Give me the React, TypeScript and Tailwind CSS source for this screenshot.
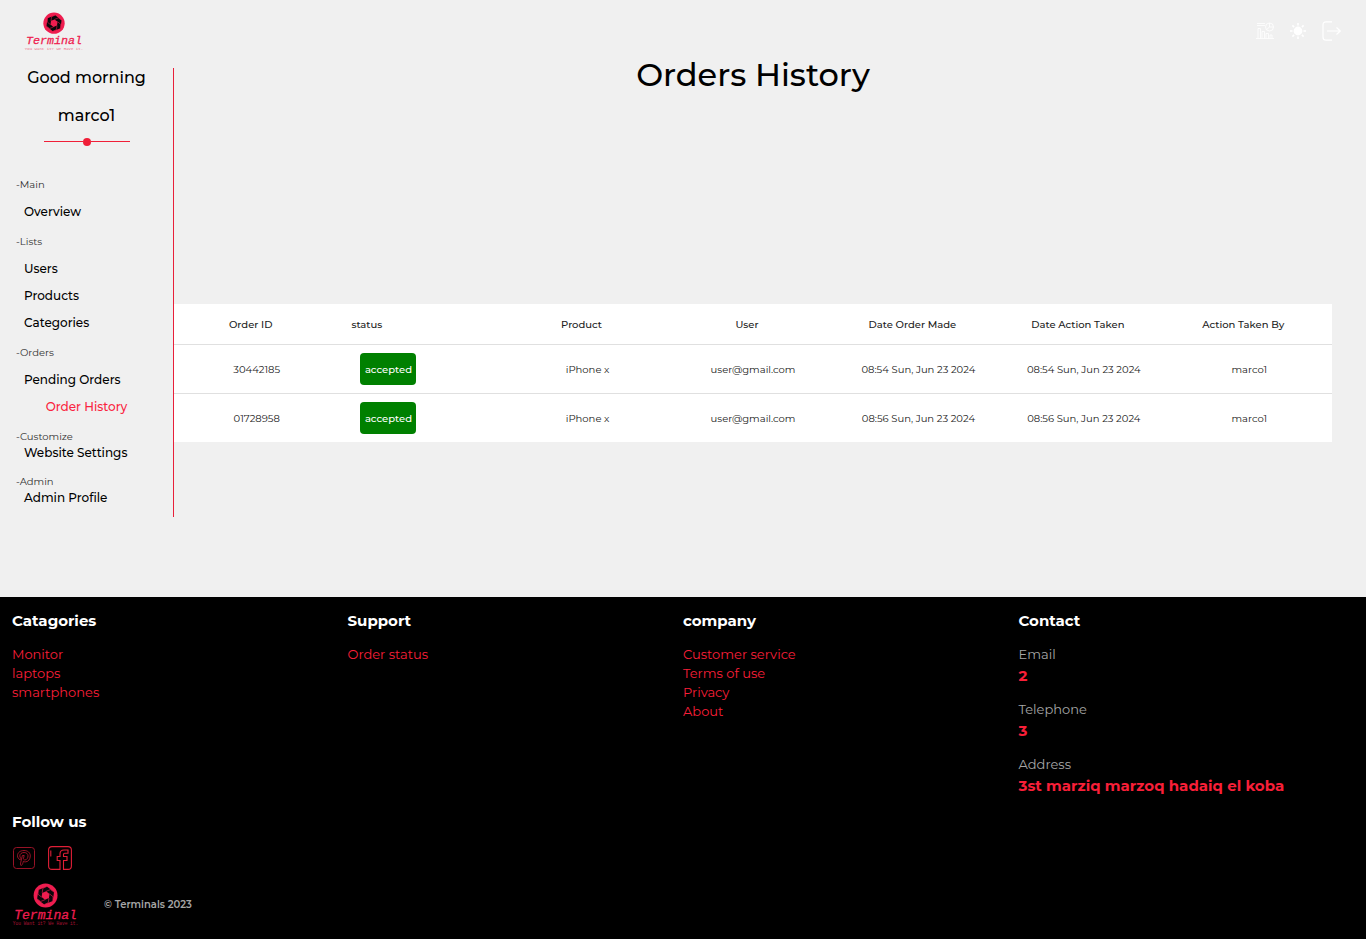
import React from "react";

type LinkItem = { label: string; active?: boolean };
type Group = { title: string; items: LinkItem[]; tight?: boolean };

const groups: Group[] = [
  { title: "-Main", items: [{ label: "Overview" }] },
  { title: "-Lists", items: [{ label: "Users" }, { label: "Products" }, { label: "Categories" }] },
  { title: "-Orders", items: [{ label: "Pending Orders" }, { label: "Order History", active: true }] },
  { title: "-Customize", items: [{ label: "Website Settings" }], tight: true },
  { title: "-Admin", items: [{ label: "Admin Profile" }], tight: true },
];

const orders = [
  { id: "30442185", status: "accepted", product: "iPhone x", user: "user@gmail.com", made: "08:54 Sun, Jun 23 2024", taken: "08:54 Sun, Jun 23 2024", by: "marco1" },
  { id: "01728958", status: "accepted", product: "iPhone x", user: "user@gmail.com", made: "08:56 Sun, Jun 23 2024", taken: "08:56 Sun, Jun 23 2024", by: "marco1" },
];

const footerColumns = [
  { title: "Catagories", links: ["Monitor", "laptops", "smartphones"] },
  { title: "Support", links: ["Order status"] },
  { title: "company", links: ["Customer service", "Terms of use", "Privacy", "About"] },
];

const contacts = [
  { label: "Email", value: "2" },
  { label: "Telephone", value: "3" },
  { label: "Address", value: "3st marziq marzoq hadaiq el koba" },
];

const blades = [0, 60, 120, 180, 240, 300];

function Logo({ className }: { className: string }) {
  return (
    <svg viewBox="0 0 116 76" className={className} role="img" aria-label="Terminal">
      <circle cx="59" cy="22" r="21" fill="#ee1d4f" />
      <g transform="translate(59 22) rotate(8)">
        <path d="M0 -16L13.900 -8V8L0 16L-13.900 8V-8Z" fill="#08070a" />
        <path d="M0 -7.500L6.500 -3.700V3.700L0 7.500L-6.500 3.700V-3.700Z" fill="#ee1d4f" />
        {blades.map((a) => (
          <path key={a} transform={`rotate(${a})`} d="M0 -7.500L7 -11.500L14 -8" fill="none" stroke="#ee1d4f" strokeWidth="1" />
        ))}
      </g>
      <text x="59" y="63" textAnchor="middle" fontSize="23" fontStyle="italic" fill="#ee1d4f" stroke="#ee1d4f" strokeWidth="0.500" fontFamily="'Liberation Mono', monospace">Terminal</text>
      <text x="59" y="74" textAnchor="middle" fontSize="8" fill="#ee1d4f" opacity="0.65" fontFamily="'Liberation Mono', monospace">You Want it? We Have it.</text>
    </svg>
  );
}

function ChartIcon() {
  return (
    <svg viewBox="0 0 18 18" className="size-[18px]" fill="none" stroke="white" strokeWidth="0.8" aria-hidden="true">
      <path d="M1 1.500h8M1 3.500h8M0 16.500h18M2 16.500V6.500h2.500v10M6 16.500V9.500h2.500v7M10 16.500V11.500h2.500v5M14 16.500V13h2v3.500" />
      <circle cx="13.500" cy="5" r="4" />
      <path d="M13.500 1V5h4M13.500 5l-3 2.600" />
    </svg>
  );
}

function SunIcon() {
  return (
    <svg viewBox="0 0 16 16" className="size-4" fill="white" stroke="white" strokeWidth="1.600" aria-hidden="true">
      <circle cx="8" cy="8" r="3.600" />
      <path d="M8 0v2.500M8 13.500V16M0 8h2.500M13.500 8H16M2.400 2.400l1.700 1.700M11.900 11.900l1.700 1.700M2.400 13.600l1.700-1.700M11.900 4.100l1.700-1.700" />
    </svg>
  );
}

function LogoutIcon() {
  return (
    <svg viewBox="0 0 20 20" className="size-5" fill="none" stroke="white" strokeWidth="1.200" aria-hidden="true">
      <path d="M10 .8H4Q1 .8 1 3.800v12.400q0 3 3 3h6M5 10h13M14.500 6.500L18.300 10l-3.800 3.500" />
    </svg>
  );
}

function PinterestIcon() {
  return (
    <svg viewBox="0 0 24 24" className="size-6" fill="none" stroke="#a8152a" strokeWidth="0.900" aria-hidden="true">
      <rect x="1.500" y="1.500" width="21" height="21" rx="3" />
      <path d="M8.200 13.800C6.600 13 5.500 11.600 5.500 9.700 5.500 6.500 8.400 4.500 12 4.500c3.700 0 6.300 2.200 6.300 5.400 0 3.600-2.300 6-5 6-.8 0-1.400-.2-1.900-.7-.4 2-.9 3.300-2.200 4.400-1-.5-.7-2.300-.4-3.500L10.400 9.500h1.800l-.8 3.300c.4.900 1 1.200 1.700 1.100 1.800-.2 2.900-2 2.900-4.100 0-2-1.600-3.300-3.900-3.300-2.500 0-4.300 1.400-4.300 3.400 0 1 .4 1.700 1.100 2.300z" />
    </svg>
  );
}

function FacebookIcon() {
  return (
    <svg viewBox="0 0 24 24" className="size-6" fill="none" stroke="#e01f37" strokeWidth="1.100" aria-hidden="true">
      <path d="M12 23.400H4Q.6 23.400.6 20V4Q.6.600 4 .600h16q3.400 0 3.400 3.400v16q0 3.400-3.400 3.400h-4.500v-8.900h3.500v-4h-3.500V8.500q0-1.200 1.200-1.200H20v-3.300h-4q-4 0-4 4v2.500H9.200v4H12zM2.800 4.500v6" />
    </svg>
  );
}

export default function App() {
  const th = "pr-3 font-medium text-center";
  const td = "text-center";
  const heading = "text-[15px] leading-6 font-bold";
  return (
    <div className="min-h-screen bg-[#f0f0f0] font-[Montserrat,Inter,sans-serif] text-black">
      <header className="flex h-[52px] items-start justify-between px-6 pt-3">
        <a href="#home"><Logo className="w-[59px]" /></a>
        <div className="flex items-center gap-4 pt-[9px]">
          <button type="button" aria-label="Statistics"><ChartIcon /></button>
          <button type="button" aria-label="Toggle theme"><SunIcon /></button>
          <button type="button" aria-label="Log out"><LogoutIcon /></button>
        </div>
      </header>

      <div className="flex items-start pb-20">
        <aside className="mt-4 w-[174px] shrink-0 border-r border-[#e8203a] pb-[11px]">
          <div className="text-center text-base leading-[19px] font-medium">
            <p>Good morning</p>
            <p className="mt-[19px]">marco1</p>
          </div>
          <div className="mx-auto mt-3 flex h-[9px] w-[86px] items-center">
            <span className="h-px flex-1 bg-[#f01f38]" />
            <span className="size-2 rounded-full bg-[#f01f38]" />
            <span className="h-px flex-1 bg-[#f01f38]" />
          </div>
          <nav className="mt-8 flex flex-col gap-3.5 px-4">
            {groups.map((g) => (
              <section key={g.title}>
                <h2 className="text-[10px] leading-[14px] text-[#333333]">{g.title}</h2>
                <ul className={g.tight ? "pl-2 leading-[17px]" : "flex flex-col gap-[9px] pt-[11px] pl-2 leading-[18px]"}>
                  {g.items.map((i) => (
                    <li key={i.label} className={i.active ? "pr-2 text-center text-[#fa2440]" : ""}>
                      <a href="#section" className="block text-[12px] leading-[inherit] font-medium">{i.label}</a>
                    </li>
                  ))}
                </ul>
              </section>
            ))}
          </nav>
        </aside>

        <main className="mr-[34px] min-w-0 flex-1">
          <h1 className="pt-0.5 text-center text-[32px] leading-[42px] font-medium">Orders History</h1>
          <table className="mt-52 w-full table-fixed border-separate border-spacing-0 bg-white text-[10px]">
            <thead>
              <tr className="h-[41px] text-[#212121] [&>th]:border-b [&>th]:border-[#e0e0e0]">
                <th className={th}>Order ID</th>
                <th className="pl-3 text-left font-medium">status</th>
                <th className={th}>Product</th>
                <th className={th}>User</th>
                <th className={th}>Date Order Made</th>
                <th className={th}>Date Action Taken</th>
                <th className={th}>Action Taken By</th>
              </tr>
            </thead>
            <tbody>
              {orders.map((o) => (
                <tr key={o.id} className="h-[49px] text-[#212121] last:h-12 [&>td]:border-b [&>td]:border-[#e0e0e0] last:[&>td]:border-b-0">
                  <td className={td}>{o.id}</td>
                  <td className="pl-[21px]">
                    <span className="flex h-8 w-14 items-center justify-center rounded bg-[#008000] font-medium text-white">{o.status}</span>
                  </td>
                  <td className={td}>{o.product}</td>
                  <td className={td}>{o.user}</td>
                  <td className={td}>{o.made}</td>
                  <td className={td}>{o.taken}</td>
                  <td className={td}>{o.by}</td>
                </tr>
              ))}
            </tbody>
          </table>
        </main>
      </div>

      <footer className="bg-black px-3 pt-3 pb-[13px] text-white">
        <div className="grid grid-cols-4">
          {footerColumns.map((c) => (
            <section key={c.title}>
              <h2 className={heading}>{c.title}</h2>
              <ul className="mt-3 text-[13px] leading-[19px] text-[#f81f38]">
                {c.links.map((l) => (
                  <li key={l}><a href="#link">{l}</a></li>
                ))}
              </ul>
            </section>
          ))}
          <section>
            <h2 className={heading}>Contact</h2>
            <dl className="mt-3 flex flex-col gap-3">
              {contacts.map((c) => (
                <div key={c.label}>
                  <dt className="text-[13px] leading-[19px] text-[#a6a6a6]">{c.label}</dt>
                  <dd className="text-[15px] leading-6 font-bold text-[#f81f38]">{c.value}</dd>
                </div>
              ))}
            </dl>
          </section>
        </div>
        <div className="mt-3">
          <h2 className={heading}>Follow us</h2>
        </div>
        <div className="mt-3 flex items-center gap-3">
          <a href="#pinterest" aria-label="Pinterest"><PinterestIcon /></a>
          <a href="#facebook" aria-label="Facebook"><FacebookIcon /></a>
        </div>
        <div className="mt-[13px] flex items-start gap-[26px]">
          <Logo className="w-[66px]" />
          <p className="pt-3.5 text-[10px] leading-4 font-semibold text-[#a6a6a6]">© Terminals 2023</p>
        </div>
      </footer>
    </div>
  );
}
